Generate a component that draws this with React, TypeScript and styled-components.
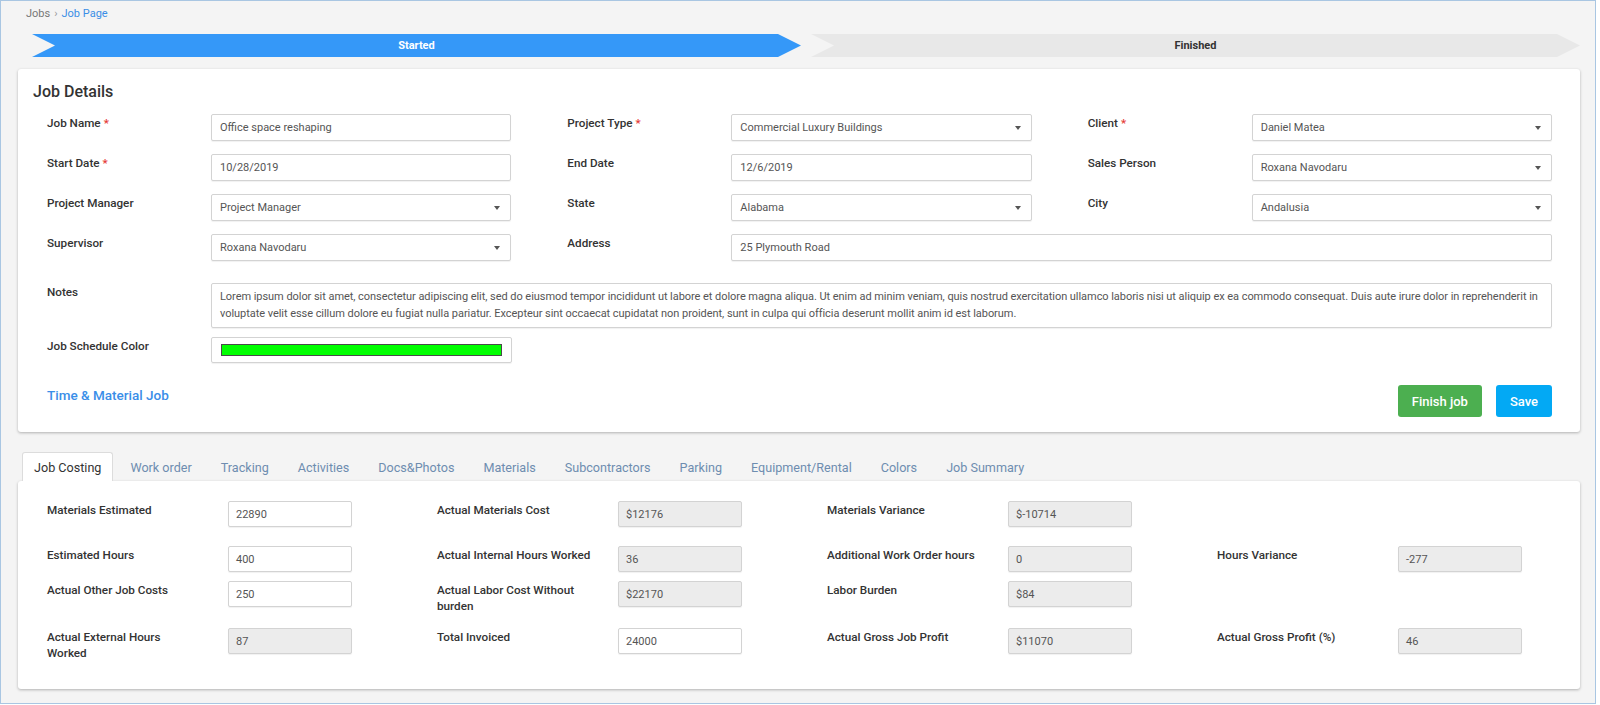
import React from "react";
import styled, { createGlobalStyle } from "styled-components";

const GlobalStyle = createGlobalStyle`
  html, body {
    margin: 0;
    padding: 0;
    background: #fff;
  }
  body {
    font-family: Roboto, "Liberation Sans", Arial, sans-serif;
    color: #333;
  }
  * {
    box-sizing: border-box;
  }
`;

const Frame = styled.div`
  width: 1596px;
  height: 704px;
  border: 1px solid #a9c6e2;
  background: #f4f4f4;
  overflow: hidden;
`;

const Breadcrumb = styled.div`
  padding: 6px 0 0 25px;
  font-size: 11px;
  line-height: 14px;
  color: #777;
`;

const Crumb = styled.span`
  color: #3a8ee6;
`;

const Sep = styled.span`
  margin: 0 4px;
  color: #999;
`;

const Progress = styled.div`
  display: flex;
  gap: 10px;
  height: 23px;
  margin: 13px 15px 0 31px;
`;

const Step = styled.div<{ $active?: boolean }>`
  flex: 1;
  display: flex;
  align-items: center;
  justify-content: center;
  font-size: 11px;
  font-weight: 700;
  color: ${({ $active }) => ($active ? "#fff" : "#333")};
  background: ${({ $active }) => ($active ? "#3598f8" : "#e8e8e8")};
  clip-path: polygon(
    0 0,
    calc(100% - 23px) 0,
    100% 50%,
    calc(100% - 23px) 100%,
    0 100%,
    23px 50%
  );
`;

const Card = styled.div`
  margin: 12px 15px 0 17px;
  background: #fff;
  border-radius: 3px;
  box-shadow: 0 1px 3px rgba(0, 0, 0, 0.28);
`;

const DetailsCard = styled(Card)`
  padding: 13px 28px 15px 15px;
`;

const Title = styled.h2`
  margin: 0 0 12px;
  font-size: 16px;
  line-height: 20px;
  font-weight: 500;
  color: #333;
`;

const FormBody = styled.div`
  padding-left: 14px;
`;

const FieldGrid = styled.div`
  display: grid;
  grid-template-columns: repeat(3, 1fr);
  column-gap: 56px;
  row-gap: 13px;
`;

const Field = styled.div<{ $mt?: number; $wide?: boolean }>`
  display: grid;
  grid-template-columns: 164px 1fr;
  align-items: start;
  margin-top: ${({ $mt }) => $mt || 0}px;
  grid-column: ${({ $wide }) => ($wide ? "2 / 4" : "auto")};
`;

const Label = styled.div`
  font-size: 11.7px;
  line-height: 16px;
  font-weight: 500;
  color: #333;
  padding-top: 1px;
  white-space: pre-line;
`;

const Req = styled.span`
  color: #e53935;
  margin-left: 3px;
`;

const Box = styled.div<{ $readonly?: boolean }>`
  position: relative;
  height: 27px;
  border: 1px solid #d3d3d3;
  border-radius: 2px;
  background: ${({ $readonly }) => ($readonly ? "#ececec" : "#fff")};
  box-shadow: 0 1px 1px rgba(0, 0, 0, 0.06);
  font-size: 11px;
  color: #555;
  display: flex;
  align-items: center;
  padding: 0 8px;
  white-space: nowrap;
`;

const Caret = styled.span`
  position: absolute;
  right: 10px;
  top: 50%;
  margin-top: -2px;
  border-left: 3.5px solid transparent;
  border-right: 3.5px solid transparent;
  border-top: 4px solid #555;
`;

const NotesBox = styled.div`
  height: 45px;
  border: 1px solid #d3d3d3;
  border-radius: 2px;
  box-shadow: 0 1px 1px rgba(0, 0, 0, 0.06);
  padding: 5px 5px 5px 8px;
  font-size: 11px;
  line-height: 16.5px;
  letter-spacing: -0.05px;
  color: #555;
`;

const ColorBox = styled.div`
  width: 301px;
  height: 26px;
  border: 1px solid #d3d3d3;
  border-radius: 2px;
  box-shadow: 0 1px 1px rgba(0, 0, 0, 0.06);
  padding: 6px 9px;
`;

const Swatch = styled.div<{ $color: string }>`
  height: 12px;
  background: ${({ $color }) => $color};
  border: 1px solid #4a4a4a;
`;

const Footer = styled.div`
  display: flex;
  justify-content: space-between;
  align-items: flex-start;
  margin-top: 22px;
`;

const JobType = styled.div`
  font-size: 13.5px;
  line-height: 20px;
  font-weight: 500;
  color: #3a8ee8;
`;

const Actions = styled.div`
  display: flex;
  gap: 14px;
`;

const Button = styled.button<{ $color: string }>`
  height: 32px;
  padding: 0 14px;
  border: none;
  border-radius: 3px;
  background: ${({ $color }) => $color};
  color: #fff;
  font-family: inherit;
  font-size: 13px;
  font-weight: 500;
`;

const TabBar = styled.div`
  display: flex;
  margin: 20px 15px 0 21px;
  position: relative;
  z-index: 1;
`;

const Tab = styled.div<{ $active?: boolean }>`
  height: 29px;
  line-height: 29px;
  padding: 0 11px;
  margin-right: 5px;
  font-size: 12.6px;
  color: ${({ $active }) => ($active ? "#333" : "#6e8db0")};
  background: ${({ $active }) => ($active ? "#fff" : "transparent")};
  border: 1px solid ${({ $active }) => ($active ? "#dcdcdc" : "transparent")};
  border-bottom: none;
  border-radius: 3px 3px 0 0;
`;

const CostCard = styled(Card)`
  margin-top: 0;
  padding: 20px 28px 28px 29px;
`;

const CostRow = styled.div<{ $mb?: number }>`
  display: grid;
  grid-template-columns: repeat(4, 305px);
  column-gap: 85px;
  margin-bottom: ${({ $mb }) => $mb || 0}px;
`;

const CostField = styled.div`
  display: grid;
  grid-template-columns: 181px 124px;
  align-items: start;
`;

const CostLabel = styled(Label)`
  padding-right: 10px;
`;

const CostBox = styled(Box)`
  height: 26px;
  padding: 0 7px;
`;

type DetailField = {
  label: string;
  value: string;
  required?: boolean;
  select?: boolean;
};

const details: DetailField[] = [
  { label: "Job Name", value: "Office space reshaping", required: true },
  { label: "Project Type", value: "Commercial Luxury Buildings", required: true, select: true },
  { label: "Client", value: "Daniel Matea", required: true, select: true },
  { label: "Start Date", value: "10/28/2019", required: true },
  { label: "End Date", value: "12/6/2019" },
  { label: "Sales Person", value: "Roxana Navodaru", select: true },
  { label: "Project Manager", value: "Project Manager", select: true },
  { label: "State", value: "Alabama", select: true },
  { label: "City", value: "Andalusia", select: true },
  { label: "Supervisor", value: "Roxana Navodaru", select: true },
];

const notes =
  "Lorem ipsum dolor sit amet, consectetur adipiscing elit, sed do eiusmod tempor incididunt ut labore et dolore magna aliqua. Ut enim ad minim veniam, quis nostrud exercitation ullamco laboris nisi ut aliquip ex ea commodo consequat. Duis aute irure dolor in reprehenderit in voluptate velit esse cillum dolore eu fugiat nulla pariatur. Excepteur sint occaecat cupidatat non proident, sunt in culpa qui officia deserunt mollit anim id est laborum.";

const tabs = [
  "Job Costing",
  "Work order",
  "Tracking",
  "Activities",
  "Docs&Photos",
  "Materials",
  "Subcontractors",
  "Parking",
  "Equipment/Rental",
  "Colors",
  "Job Summary",
];

type CostItem = { label: string; value: string; readonly?: boolean } | null;

// labels keep the line breaks of the original form
const costRows: { mb: number; items: CostItem[] }[] = [
  {
    mb: 19,
    items: [
      { label: "Materials Estimated", value: "22890" },
      { label: "Actual Materials Cost", value: "$12176", readonly: true },
      { label: "Materials Variance", value: "$-10714", readonly: true },
      null,
    ],
  },
  {
    mb: 9,
    items: [
      { label: "Estimated Hours", value: "400" },
      { label: "Actual Internal Hours Worked", value: "36", readonly: true },
      { label: "Additional Work Order hours", value: "0", readonly: true },
      { label: "Hours Variance", value: "-277", readonly: true },
    ],
  },
  {
    mb: 14,
    items: [
      { label: "Actual Other Job Costs", value: "250" },
      { label: "Actual Labor Cost Without\nburden", value: "$22170", readonly: true },
      { label: "Labor Burden", value: "$84", readonly: true },
      null,
    ],
  },
  {
    mb: 0,
    items: [
      { label: "Actual External Hours\nWorked", value: "87", readonly: true },
      { label: "Total Invoiced", value: "24000" },
      { label: "Actual Gross Job Profit", value: "$11070", readonly: true },
      { label: "Actual Gross Profit (%)", value: "46", readonly: true },
    ],
  },
];

const App: React.FC = () => {
  return (
    <Frame>
      <GlobalStyle />
      <Breadcrumb>
        Jobs<Sep>›</Sep>
        <Crumb>Job Page</Crumb>
      </Breadcrumb>

      <Progress>
        <Step $active>Started</Step>
        <Step>Finished</Step>
      </Progress>

      <DetailsCard>
        <Title>Job Details</Title>
        <FormBody>
          <FieldGrid>
            {details.map((f) => (
              <Field key={f.label}>
                <Label>
                  {f.label}
                  {f.required && <Req>*</Req>}
                </Label>
                <Box>
                  {f.value}
                  {f.select && <Caret />}
                </Box>
              </Field>
            ))}
            <Field $wide>
              <Label>Address</Label>
              <Box>25 Plymouth Road</Box>
            </Field>
          </FieldGrid>

          <Field $mt={22}>
            <Label>Notes</Label>
            <NotesBox>{notes}</NotesBox>
          </Field>

          <Field $mt={9}>
            <Label>Job Schedule Color</Label>
            <ColorBox>
              <Swatch $color="#00ff00" />
            </ColorBox>
          </Field>

          <Footer>
            <JobType>Time &amp; Material Job</JobType>
            <Actions>
              <Button $color="#4caf50">Finish job</Button>
              <Button $color="#03a9f4">Save</Button>
            </Actions>
          </Footer>
        </FormBody>
      </DetailsCard>

      <TabBar>
        {tabs.map((t, i) => (
          <Tab key={t} $active={i === 0}>
            {t}
          </Tab>
        ))}
      </TabBar>

      <CostCard>
        {costRows.map((row, ri) => (
          <CostRow key={`row-${ri}`} $mb={row.mb}>
            {row.items.map((item, ci) =>
              item ? (
                <CostField key={item.label}>
                  <CostLabel>{item.label}</CostLabel>
                  <CostBox $readonly={item.readonly}>{item.value}</CostBox>
                </CostField>
              ) : (
                <div key={`empty-${ri}-${ci}`} />
              )
            )}
          </CostRow>
        ))}
      </CostCard>
    </Frame>
  );
};

export default App;
